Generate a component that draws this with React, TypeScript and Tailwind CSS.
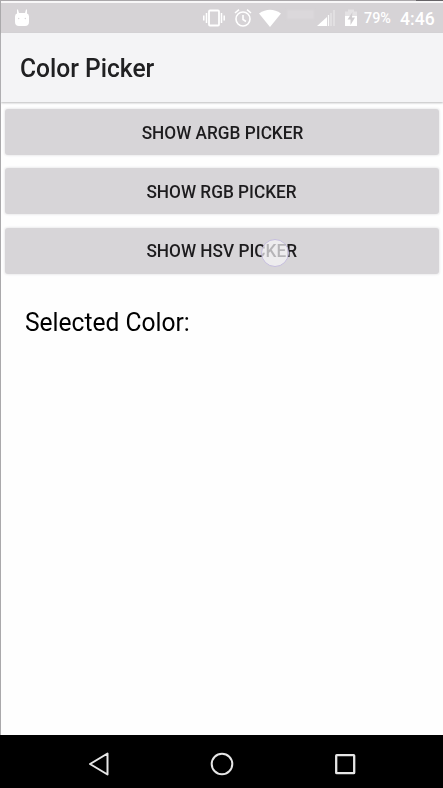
import React from 'react';

function StatusIcons() {
  return (
    <div className="flex h-full w-full items-center text-white">
      <svg className="ml-[13px] shrink-0" width="16" height="18" viewBox="0 0 16 18" fill="white">
        <path d="M3 .5h1L5 4h6l1-3.500h1V4.500q2 .7 2 3V13q0 4-4 4H5q-4 0-4-4V7.500q0-2.300 2-3Z" />
        <circle cx="4.700" cy="9.500" r=".7" fill="#d8d5d8" />
        <circle cx="11.300" cy="9.500" r=".7" fill="#d8d5d8" />
      </svg>
      <svg className="ml-[172px] shrink-0" width="24" height="18" viewBox="0 0 24 18" fill="none" stroke="white">
        <rect x="7" y="1.500" width="10" height="15" rx="1" strokeWidth="1.800" />
        <path d="M4.500 4v10M19.500 4v10M1.800 6.500v5M22.200 6.500v5" strokeWidth="1.500" />
      </svg>
      <svg className="ml-[8px] shrink-0" width="18" height="20" viewBox="0 0 18 20" fill="none" stroke="white" strokeWidth="1.600">
        <circle cx="9" cy="11" r="7" />
        <path d="M9 7v4.500l3 2M1 5l4-3.300M17 5l-4-3.300" />
      </svg>
      <svg className="ml-[7px] shrink-0" width="22" height="18" viewBox="0 0 22 18" fill="white">
        <path d="M0 4.500Q11-3 22 4.500L11 18Z" />
      </svg>
      <div className="ml-[6px] h-[9px] w-[27px] -translate-y-[4px] bg-[#dbd8db] blur-[1px]" />
      <svg className="ml-[3px] shrink-0" width="20" height="18" viewBox="0 0 20 18">
        <path d="M10 8v9H0Z" fill="white" />
        <path d="M11.500 6v11" stroke="#fafafa" strokeWidth="1.200" />
        <path d="M14 4v13M17 1v16" stroke="#e5e3e5" strokeWidth="1.500" />
      </svg>
      <svg className="ml-[8px] shrink-0" width="12" height="18" viewBox="0 0 12 18">
        <path d="M0 2.500h3V.5h6v2h3V17H0Z" fill="#e4e2e4" />
        <path d="M0 7h12v10H0Z" fill="white" />
        <path d="M7.500 3 2.500 10.500h3V16l4.500-7.500H7Z" fill="#d0cdd0" />
      </svg>
      <span className="ml-[7px] w-[28px] pt-[3px] text-[14.400px] leading-none font-medium whitespace-nowrap">79%</span>
      <span className="ml-[8px] pt-[3px] text-[17.600px] leading-none font-medium whitespace-nowrap">4:46</span>
    </div>
  );
}

function PickerButton({ label, touched = false }: { label: string; touched?: boolean }) {
  return (
    <button className="relative flex h-[46px] w-[434px] items-center justify-center rounded-[3px] bg-[#d7d5d8] text-[18px] font-medium text-[#1d1c1e] shadow-[0_0_2px_1px_#ededee]">
      <span className="scale-x-[0.957]">{label}</span>
      {touched && (
        <span className="absolute top-[11px] left-[256px] size-[28px] rounded-full border border-[#c5bddd] bg-[#f6f5f8]/70" />
      )}
    </button>
  );
}

export default function App() {
  return (
    <div className="flex h-[788px] w-[443px] flex-col overflow-hidden bg-[#fefefe] font-['Roboto',sans-serif]">
      <div className="flex h-px shrink-0 justify-end bg-[#aaa7aa]">
        <div className="w-[27px] bg-[#666367]" />
      </div>
      <div className="flex grow flex-col border-l border-[#aaa9ab]">
        <div className="h-[2px] shrink-0 bg-[#f8f7f8]" />
        <header className="h-[30px] shrink-0 bg-[#d6d3d6]">
          <StatusIcons />
        </header>
        <div className="flex h-[69px] shrink-0 items-center bg-[#f4f4f6] pl-[19px] shadow-[0_1px_2px_#bcbcbe]">
          <h1 className="origin-left scale-x-[0.946] text-[26px] leading-none font-medium text-[#202022]">Color Picker</h1>
        </div>
        <main className="flex grow flex-col pt-[7px] pl-[4px]">
          <div className="flex flex-col gap-[13.300px]">
            <PickerButton label="SHOW ARGB PICKER" />
            <PickerButton label="SHOW RGB PICKER" />
            <PickerButton label="SHOW HSV PICKER" touched />
          </div>
          <p className="mt-[33px] ml-[20px] origin-left scale-x-[0.945] text-[26px] leading-[30px] text-black">Selected Color:</p>
        </main>
      </div>
      <nav className="flex h-[53px] shrink-0 items-center bg-black">
        <svg className="mt-[5px] ml-[88px]" width="22" height="24" viewBox="0 0 22 24" fill="none" stroke="#e6e6e6" strokeWidth="2" strokeLinejoin="round">
          <path d="M19.500 1.500v21L2 12Z" />
        </svg>
        <svg className="mt-[5px] ml-[100px]" width="24" height="24" viewBox="0 0 24 24" fill="none" stroke="#e6e6e6" strokeWidth="2">
          <circle cx="12" cy="12" r="10.300" />
        </svg>
        <svg className="mt-[5px] ml-[100px]" width="22" height="22" viewBox="0 0 22 22" fill="none" stroke="#e6e6e6" strokeWidth="2.300">
          <rect x="2.200" y="2.200" width="18" height="18" rx=".5" />
        </svg>
      </nav>
    </div>
  );
}
